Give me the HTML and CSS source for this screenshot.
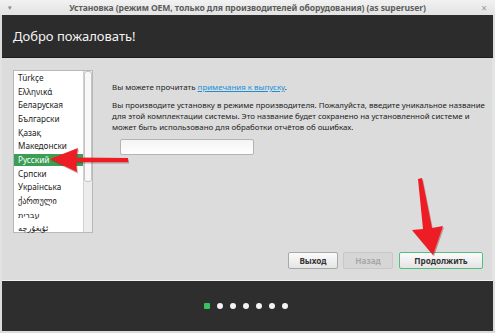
FILE: index.html
```html
<!DOCTYPE html>
<html lang="ru">
<head>
    <meta charset="UTF-8">
    <title>Установка</title>
    <link rel="stylesheet" href="styles.css">
</head>
<body>
    <div class="window">
        <!-- Title bar -->
        <div class="titlebar">
            <span class="tb-menu">&#9662;</span>
            <span class="tb-title">Установка (режим OEM, только для производителей оборудования) (as superuser)</span>
            <span class="tb-close">&times;</span>
        </div>

        <!-- Dark header -->
        <div class="header">Добро пожаловать!</div>

        <!-- Main content -->
        <div class="content">
            <div class="langlist">
                <ul class="langs">
                    <li>Türkçe</li>
                    <li>Ελληνικά</li>
                    <li>Беларуская</li>
                    <li>Български</li>
                    <li>Қазақ</li>
                    <li>Македонски</li>
                    <li class="selected">Русский</li>
                    <li>Српски</li>
                    <li>Українська</li>
                    <li>ქართული</li>
                    <li>עברית</li>
                    <li>ئۇيغۇرچە</li>
                </ul>
                <div class="scrollbar"><div class="thumb"></div></div>
            </div>

            <div class="main">
                <p class="line">Вы можете прочитать <a href="#">примечания к выпуску</a>.</p>
                <p class="para">Вы производите установку в режиме производителя. Пожалуйста, введите уникальное название<br>для этой комплектации системы. Это название будет сохранено на установленной системе и<br>может быть использовано для обработки отчётов об ошибках.</p>
                <input class="oem-name" type="text">
                <div class="buttons">
                    <button class="btn">Выход</button>
                    <button class="btn disabled">Назад</button>
                    <button class="btn primary">Продолжить</button>
                </div>
            </div>
        </div>

        <!-- Footer with progress dots -->
        <div class="footer">
            <span class="dot current"></span>
            <span class="dot"></span>
            <span class="dot"></span>
            <span class="dot"></span>
            <span class="dot"></span>
            <span class="dot"></span>
            <span class="dot"></span>
        </div>

        <!-- Red annotation arrows -->
        <svg class="arrows" width="495" height="333" viewBox="0 0 495 333">
            <g fill="#7a1010" opacity="0.35" transform="translate(1,1.5)">
                <path d="M128 158 L76 157.5 L78 148 L50 159 L77 172 L76 162 L128 162 Z"/>
                <path d="M418 179 L422 178 L432 228 L443 226 L433 255 L412 230 L423 229 Z"/>
            </g>
            <g fill="#ee1c24">
                <path d="M128 158 L76 157.5 L78 148 L50 159 L77 172 L76 162 L128 162 Z"/>
                <path d="M418 179 L422 178 L432 228 L443 226 L433 255 L412 230 L423 229 Z"/>
            </g>
        </svg>
    </div>
</body>
</html>
```

FILE: styles.css
```css
html, body {
    margin: 0;
    padding: 0;
}
body {
    font-family: "Noto Sans", "DejaVu Sans", sans-serif;
    background: #d8d8d8;
}
.window {
    position: relative;
    width: 495px;
    height: 333px;
    background: #dcdcdc;
    display: flex;
    flex-direction: column;
    overflow: hidden;
}

/* Title bar */
.titlebar {
    height: 15px;
    background: linear-gradient(#f2f2f2, #e2e2e2);
    display: flex;
    align-items: center;
    padding: 0 8px;
    color: #6a6a6a;
    font-size: 8.6px;
}
.tb-menu {
    font-size: 7px;
    color: #888;
    width: 14px;
}
.tb-title {
    flex: 1;
    text-align: center;
    font-weight: bold;
    color: #5e5e5e;
    letter-spacing: -0.1px;
}
.tb-close {
    width: 14px;
    text-align: right;
    font-size: 10px;
    color: #9a9a9a;
}

/* Dark header */
.header {
    height: 42px;
    margin: 0 2px;
    background: #2c2c2c;
    color: #f4f4f4;
    font-size: 13px;
    line-height: 42px;
    padding-left: 11px;
    border-bottom: 1px solid #1c1c1c;
}

/* Content */
.content {
    flex: 1;
    display: flex;
    padding: 12px 9px 11px 13px;
    border-left: 2px solid #e2e2e2;
    border-right: 3px solid #e4e4e4;
}
.langlist {
    flex-shrink: 0;
    width: 80px;
    height: 163px;
    background: #fff;
    border: 1px solid #b8b8b8;
    box-sizing: border-box;
    display: flex;
    margin-left: -2px;
}
.langs {
    list-style: none;
    margin: 0;
    padding: 0;
    flex: 1;
    font-size: 8.2px;
    color: #222;
}
.langs li {
    height: 13.7px;
    line-height: 13.7px;
    padding-left: 4px;
    white-space: nowrap;
}
.langs li.selected {
    background: #3c9e55;
    color: #fff;
    height: 11.5px;
    line-height: 11.5px;
    margin: 1px 0;
}
.scrollbar {
    width: 8px;
    background: #ececec;
    border-left: 1px solid #d0d0d0;
}
.thumb {
    height: 111px;
    background: #f8f8f8;
    border: 1px solid #c4c4c4;
    border-radius: 3px;
    box-sizing: border-box;
}

.main {
    flex: 1;
    min-width: 0;
    display: flex;
    flex-direction: column;
    padding-left: 19px;
    padding-top: 12px;
    font-size: 7.9px;
    color: #222;
}
.main p {
    margin: 0;
    white-space: nowrap;
    line-height: 11px;
}
.main a {
    color: #1a8fd6;
}
.para {
    margin-top: 7px !important;
}
.oem-name {
    width: 134px;
    height: 16px;
    margin: 6px 0 0 8px;
    box-sizing: border-box;
    border: 1px solid #b4b4b4;
    border-radius: 2px;
    background: linear-gradient(#f4f4f4, #ffffff);
}
.buttons {
    margin-top: auto;
    display: flex;
    justify-content: flex-end;
    gap: 5px;
}
.btn {
    height: 17px;
    width: 50px;
    padding: 0;
    font-family: inherit;
    font-size: 8.2px;
    font-weight: bold;
    color: #333;
    background: linear-gradient(#fbfbfb, #e4e4e4);
    border: 1px solid #a8a8a8;
    border-radius: 2px;
}
.btn.disabled {
    color: #a8a8a8;
    background: #d6d6d6;
    border-color: #c8c8c8;
}
.btn.primary {
    width: 84px;
    margin-left: 1px;
    border-color: #55c07a;
}

/* Footer */
.footer {
    height: 50px;
    margin: 0 2px 2px;
    background: #2e2e2e;
    display: flex;
    justify-content: center;
    align-items: center;
    gap: 7px;
    padding-right: 4px;
    border-top: 1px solid #f0f0f0;
}
.dot {
    width: 6px;
    height: 6px;
    border-radius: 50%;
    background: #f4f4f4;
}
.dot.current {
    border-radius: 1px;
    background: #35c45c;
}

/* Annotation overlay */
.arrows {
    position: absolute;
    left: 0;
    top: 0;
    pointer-events: none;
}
```
